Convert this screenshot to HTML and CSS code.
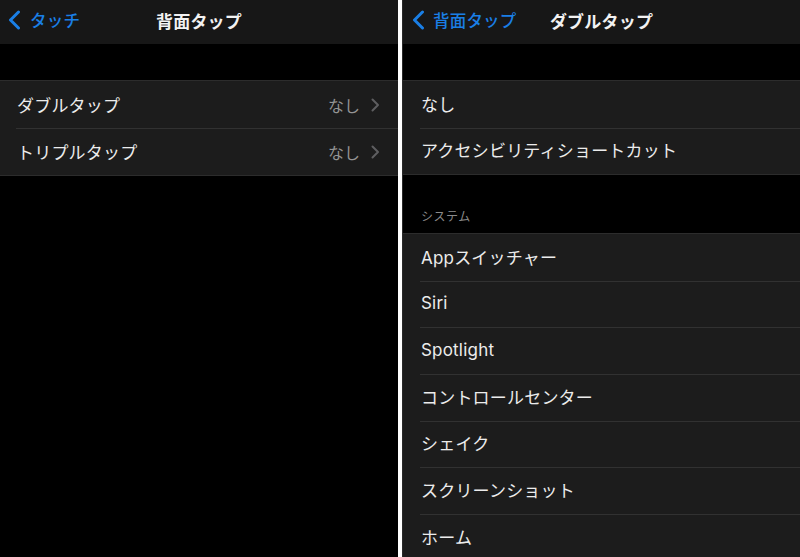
FILE: index.html
```html
<!DOCTYPE html>
<html lang="ja">
<head>
<meta charset="utf-8">
<link rel="stylesheet" href="styles.css">
</head>
<body>
<div class="screen">
  <section class="pane pane-left">
    <header class="nav">
      <div class="back">
        <svg class="back-chev" viewBox="0 0 13 20" width="13" height="20"><path d="M10.5 2 L2.5 10 L10.5 18" fill="none" stroke="currentColor" stroke-width="3" stroke-linecap="round" stroke-linejoin="round"/></svg>
        <span>タッチ</span>
      </div>
      <div class="title">背面タップ</div>
    </header>
    <div class="spacer"></div>
    <ul class="group">
      <li class="row"><span class="label">ダブルタップ</span><span class="value">なし<svg class="chev" viewBox="0 0 9 14" width="9" height="14"><path d="M1.5 1.5 L7 7 L1.5 12.5" fill="none" stroke="currentColor" stroke-width="2" stroke-linecap="round" stroke-linejoin="round"/></svg></span></li>
      <li class="row"><span class="label">トリプルタップ</span><span class="value">なし<svg class="chev" viewBox="0 0 9 14" width="9" height="14"><path d="M1.5 1.5 L7 7 L1.5 12.5" fill="none" stroke="currentColor" stroke-width="2" stroke-linecap="round" stroke-linejoin="round"/></svg></span></li>
    </ul>
  </section>
  <section class="pane pane-right">
    <header class="nav">
      <div class="back">
        <svg class="back-chev" viewBox="0 0 13 20" width="13" height="20"><path d="M10.5 2 L2.5 10 L10.5 18" fill="none" stroke="currentColor" stroke-width="3" stroke-linecap="round" stroke-linejoin="round"/></svg>
        <span>背面タップ</span>
      </div>
      <div class="title">ダブルタップ</div>
    </header>
    <div class="spacer"></div>
    <ul class="group">
      <li class="row"><span class="label">なし</span></li>
      <li class="row"><span class="label">アクセシビリティショートカット</span></li>
    </ul>
    <div class="section-head">システム</div>
    <ul class="group group-sys">
      <li class="row"><span class="label">Appスイッチャー</span></li>
      <li class="row"><span class="label">Siri</span></li>
      <li class="row"><span class="label">Spotlight</span></li>
      <li class="row"><span class="label">コントロールセンター</span></li>
      <li class="row"><span class="label">シェイク</span></li>
      <li class="row"><span class="label">スクリーンショット</span></li>
      <li class="row"><span class="label">ホーム</span></li>
    </ul>
  </section>
</div>
</body>
</html>
```

FILE: styles.css
```css
* { box-sizing: border-box; }
html, body {
  margin: 0;
  padding: 0;
  background: #ffffff;
}
body {
  width: 800px;
  height: 557px;
  overflow: hidden;
  font-family: Inter, "Noto Sans CJK JP", sans-serif;
  -webkit-font-smoothing: antialiased;
}
.screen {
  display: flex;
  gap: 4px;
  height: 557px;
}
.pane {
  background: #000;
  height: 557px;
  overflow: hidden;
  display: flex;
  flex-direction: column;
}
.pane-left { width: 398px; }
.pane-right { flex: 1; border-left: 1px solid #2a2a2a; }

.nav {
  height: 44px;
  flex: none;
  background: #171717;
  position: relative;
  display: flex;
  align-items: center;
  justify-content: center;
  padding-bottom: 4px;
}
.back {
  position: absolute;
  left: 8px;
  top: 0;
  height: 40px;
  display: flex;
  align-items: center;
  gap: 9px;
  color: #1a7fe6;
  font-size: 16.5px;
  font-weight: 500;
  letter-spacing: 0.2px;
}
.pane-right .back { left: 9px; gap: 8px; }
.back-chev { display: block; }
.title {
  color: #f2f2f2;
  font-size: 17px;
  font-weight: 700;
  letter-spacing: 0.2px;
}
.spacer { height: 36px; flex: none; }

.group {
  list-style: none;
  margin: 0;
  padding: 0;
  background: #1c1c1c;
  border-top: 1px solid #2c2c2c;
  border-bottom: 1px solid #2c2c2c;
  flex: none;
}
.row {
  height: 47px;
  display: flex;
  align-items: center;
  justify-content: space-between;
  padding: 0 18px 0 17px;
  position: relative;
  color: #ececec;
  font-size: 17px;
}
.row + .row::before {
  content: "";
  position: absolute;
  top: 0;
  left: 16px;
  right: 0;
  height: 1px;
  background: #313131;
}
.pane-right .row { padding-left: 18px; height: 46.6px; padding-bottom: 2px; }
.pane-right .row + .row::before { left: 17px; }
.label { letter-spacing: 0.2px; }
.value {
  display: flex;
  align-items: center;
  gap: 11px;
  color: #949494;
  font-size: 16px;
}
.chev { color: #5e5e60; display: block; }

.section-head {
  height: 58px;
  flex: none;
  display: flex;
  align-items: flex-end;
  padding: 0 0 9px 18px;
  color: #8a8a8a;
  font-size: 12px;
  letter-spacing: 0.5px;
}
.group-sys { border-bottom: none; }
```
